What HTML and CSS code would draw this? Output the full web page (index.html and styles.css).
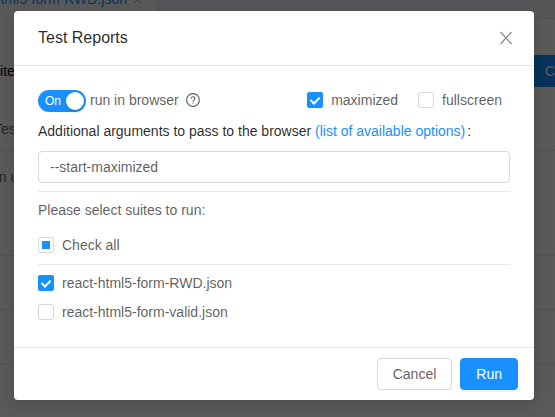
FILE: index.html
```html
<!DOCTYPE html>
<html lang="en">
<head>
<meta charset="utf-8">
<meta name="viewport" content="width=device-width, initial-scale=1">
<title>Test Reports</title>
<link rel="stylesheet" href="styles.css">
</head>
<body>
<div class="page" inert>
  <div class="tabs"><div class="tab"><span>react-html5-form-RWD.json</span><svg class="tab-close" viewBox="0 0 10 10"><path d="M1 1l8 8M9 1l-8 8"/></svg></div></div>
  <div class="toolbar"><span>Suite</span><button class="create" type="button">Create</button></div>
  <div class="rows">
    <div class="row head"><span>Test</span></div>
    <div class="row tall"><span>on user</span></div>
    <div class="row"></div>
    <div class="row"></div>
    <div class="row"></div>
  </div>
</div>
<div class="mask">
  <form class="modal" role="dialog" aria-labelledby="title">
    <header class="header">
      <h1 id="title">Test Reports</h1>
      <button class="close" type="button" aria-label="Close"><svg viewBox="0 0 14 14"><path d="M1.500 1l11 12M12.500 1l-11 12"/></svg></button>
    </header>
    <div class="body">
      <div class="options">
        <label class="switch-label"><span class="switch"><input type="checkbox" role="switch" checked><span class="on">On</span></span>run in browser</label>
        <svg class="help" viewBox="0 0 14 14"><circle cx="7" cy="7" r="6.400"/><path d="M5.100 5.700C5.100 3.200 8.900 3.200 8.900 5.500C8.900 6.900 7 6.900 7 8.500M7 9.500v1.100"/></svg>
        <div class="modes">
          <label class="check"><input type="checkbox" checked>maximized</label>
          <label class="check"><input type="checkbox">fullscreen</label>
        </div>
      </div>
      <div class="args-label"><label for="args">Additional arguments to pass to the browser</label> <a href="#options">(list of available options)</a><span class="colon">:</span></div>
      <input class="args" id="args" type="text" value="--start-maximized">
      <fieldset class="suites">
        <legend class="legend">Please select suites to run:</legend>
        <div class="all"><label class="check"><input class="partial" type="checkbox">Check all</label></div>
        <div class="list">
          <label class="check"><input type="checkbox" checked>react-html5-form-RWD.json</label>
          <label class="check"><input type="checkbox">react-html5-form-valid.json</label>
        </div>
      </fieldset>
    </div>
    <footer class="footer">
      <button class="button" type="button">Cancel</button>
      <button class="button primary" type="button">Run</button>
    </footer>
  </form>
</div>
</body>
</html>
```
FILE: styles.css
```css
*, ::before { box-sizing: border-box; }
body {
  margin: 0;
  height: 100vh;
  overflow: hidden;
  font: 14px/21px "Liberation Sans", Arial, sans-serif;
  color: rgba(0, 0, 0, 0.65);
  background: #fff;
}
button, input { font: inherit; color: inherit; }

/* Page below the dialog */
.page { height: 100vh; overflow: hidden; }
.tabs {
  display: flex;
  height: 19px;
  background: #f0f2f5;
  border-bottom: 1px solid #e8e8e8;
}
.tab {
  display: flex;
  align-items: flex-start;
  justify-content: flex-end;
  gap: 6px;
  width: 158px;
  height: 30px;
  margin-top: -11px;
  padding-right: 15px;
  white-space: nowrap;
  background: #fff;
  border-right: 1px solid #e8e8e8;
  color: #1890ff;
}
.tab-close { flex: none; width: 9px; height: 9px; margin-top: 6px; fill: none; stroke: #8c8c8c; }
.toolbar {
  display: flex;
  align-items: center;
  justify-content: space-between;
  height: 104px;
  color: #000;
}
.toolbar span { margin-left: -17px; }
.create {
  width: 80px;
  height: 32px;
  margin-right: -50px;
  padding: 0 0 0 20px;
  border: 0;
  background: #1890ff;
  color: #fff;
  text-align: left;
}
.row { height: 54px; border-bottom: 1px solid #e8e8e8; }
.row.head { height: 28px; line-height: 12px; }
.row.head span { margin-left: -6px; }
.row.tall { height: 105px; padding-top: 16px; }
.row.tall span { margin-left: -9px; }

/* Dialog */
.mask {
  position: absolute;
  inset: 0;
  padding: 11px 21px 17px 14px;
  background: rgba(0, 0, 0, 0.65);
}
.modal {
  background: #fff;
  border-radius: 4px;
  box-shadow: 0 4px 12px rgba(0, 0, 0, 0.15);
}
.header {
  display: flex;
  align-items: center;
  justify-content: space-between;
  padding: 16px 21px 16px 24px;
  border-bottom: 1px solid #e8e8e8;
}
h1 {
  margin: 0;
  font-size: 16px;
  line-height: 22px;
  font-weight: 400;
  color: rgba(0, 0, 0, 0.85);
}
.close { display: flex; padding: 0; border: 0; background: none; }
.close svg { width: 14px; height: 14px; fill: none; stroke: #888; stroke-width: 1.200; }
.body { padding: 24px 24px 25px; }
.options { display: flex; align-items: flex-start; }
.switch-label { display: flex; align-items: flex-start; gap: 4px; line-height: 20px; }
.switch { display: grid; align-items: center; }
.switch input, .switch .on { grid-area: 1 / 1; }
.switch input {
  appearance: none;
  display: flex;
  justify-content: flex-end;
  width: 48px;
  height: 22px;
  margin: 0;
  padding: 2px;
  border-radius: 11px;
  background: #1890ff;
}
.switch input::before {
  content: "";
  width: 18px;
  height: 18px;
  border-radius: 50%;
  background: #fff;
  box-shadow: 0 2px 4px rgba(0, 35, 11, 0.2);
}
.on { z-index: 1; padding-left: 7px; font-size: 12px; color: #fff; }
.help { width: 14px; height: 14px; margin: 3px 0 0 7px; fill: none; stroke: #595959; stroke-width: 1.100; }
.modes { display: flex; gap: 20px; margin-left: auto; padding-right: 8px; }
.check { display: flex; align-items: center; gap: 8px; line-height: 20px; }
.check input {
  appearance: none;
  display: grid;
  place-items: center;
  width: 16px;
  height: 16px;
  margin: 0;
  border: 1px solid #d9d9d9;
  border-radius: 2px;
  background: #fff;
}
.check input:checked { border-color: #1890ff; background: #1890ff; }
.check input:checked::before {
  content: "";
  width: 6px;
  height: 9px;
  border: solid #fff;
  border-width: 0 2px 2px 0;
  transform: translateY(-1px) rotate(45deg);
}
.check .partial::before { content: ""; width: 8px; height: 8px; background: #1890ff; }
.args-label { margin-top: 9px; color: rgba(0, 0, 0, 0.85); }
a { color: #1890ff; text-decoration: none; }
.colon { margin-left: 2px; }
.args {
  display: block;
  width: 100%;
  height: 32px;
  margin: 9px 0 8px;
  padding: 4px 11px;
  border: 1px solid #d9d9d9;
  border-radius: 4px;
  background: #fff;
}
.suites { margin: 0; padding: 0; border: 0; border-top: 1px solid #e8e8e8; }
.legend { float: left; width: 100%; margin: 8px 0 14px; padding: 0; }
.all { clear: both; padding-bottom: 9px; border-bottom: 1px solid #e8e8e8; }
.list { display: grid; gap: 9px; padding-top: 8px; }
.footer {
  display: flex;
  justify-content: flex-end;
  gap: 8px;
  padding: 10px 16px;
  border-top: 1px solid #e8e8e8;
}
.button {
  height: 32px;
  padding: 0 15px;
  border: 1px solid #d9d9d9;
  border-radius: 4px;
  background: #fff;
}
.primary {
  border-color: #1890ff;
  background: #1890ff;
  color: #fff;
  box-shadow: 0 2px 0 rgba(0, 0, 0, 0.04);
}
```
